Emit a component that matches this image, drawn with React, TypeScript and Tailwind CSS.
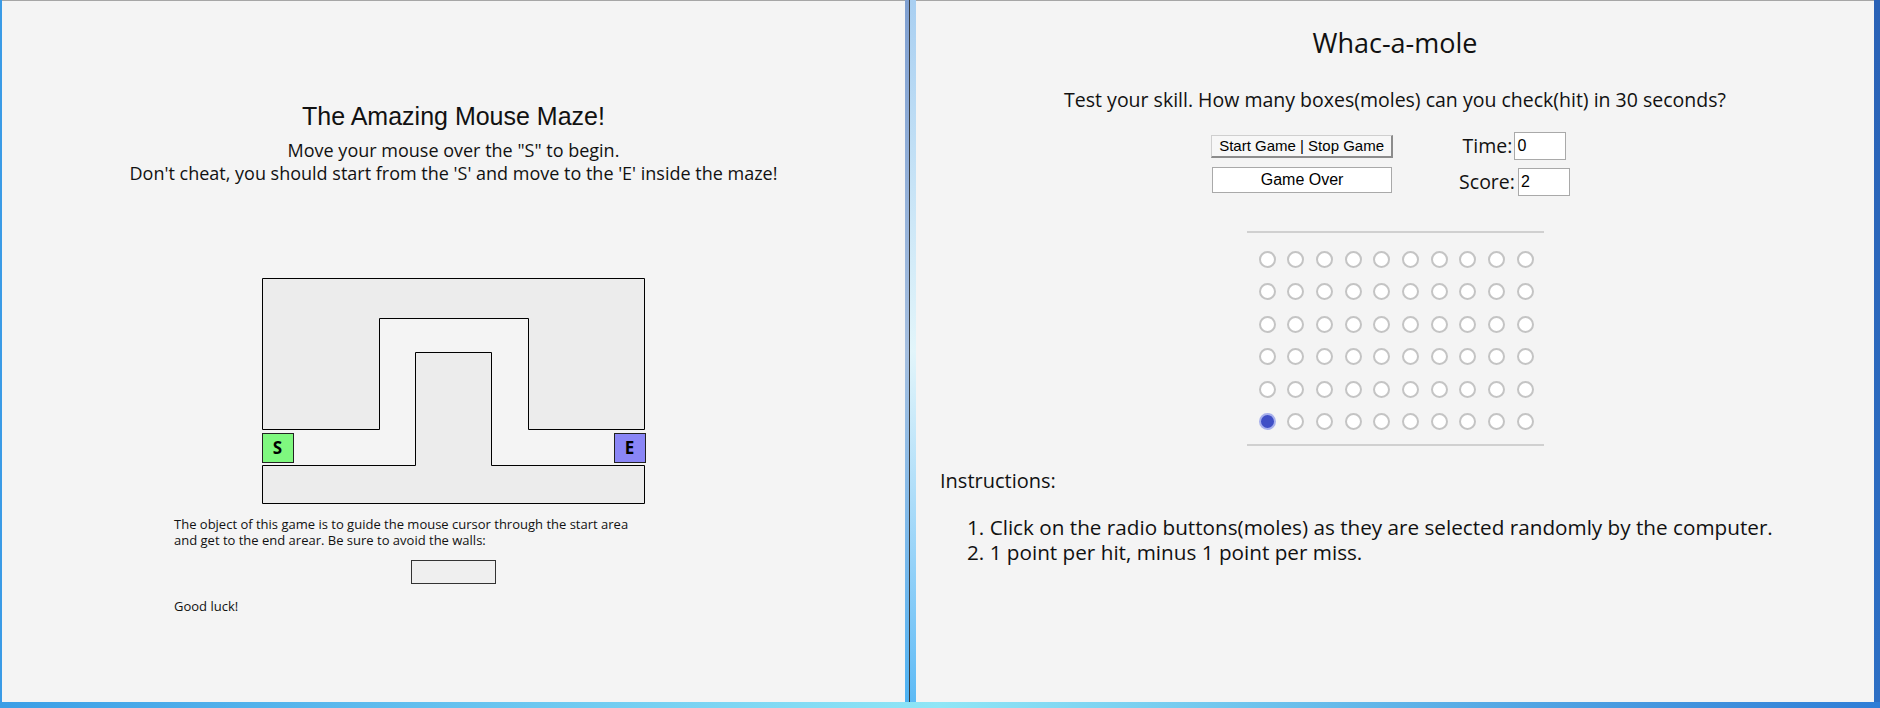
import React from "react";

const sans = "font-['Open_Sans',sans-serif]";
const arial = "font-['Liberation_Sans',Arial,sans-serif]";

function Maze() {
  return (
    <div className="relative h-[226px] w-[384px]">
      <svg width="384" height="226" className="absolute inset-0">
        <path
          d="M0.5 0.5H382.5V151.5H266.5V40.5H117.5V151.5H0.5Z"
          fill="#ececec"
          stroke="#000"
        />
        <path
          d="M0.5 187.5H153.5V74.5H229.5V187.5H382.5V225.5H0.5Z"
          fill="#ececec"
          stroke="#000"
        />
      </svg>
      <div
        className={`absolute left-0 top-[155px] flex h-[30px] w-[32px] items-center justify-center border border-[#222] bg-[#7ff87f] text-[17px] font-bold text-black ${sans}`}
      >
        S
      </div>
      <div
        className={`absolute left-[352px] top-[155px] flex h-[30px] w-[32px] items-center justify-center border border-[#222] bg-[#8a86f6] text-[17px] font-bold text-black ${sans}`}
      >
        E
      </div>
    </div>
  );
}

function MazePanel() {
  return (
    <div className="flex h-full w-[903px] flex-col items-center border-t border-[#a6a6a6] bg-[#f4f4f4] pt-[100px] text-[#111]">
      <h1 className={`text-[25px] leading-[30px] ${arial}`}>The Amazing Mouse Maze!</h1>
      <p className={`mt-[8px] text-center text-[18px] leading-[23px] ${sans}`}>
        Move your mouse over the "S" to begin.
        <br />
        Don't cheat, you should start from the 'S' and move to the 'E' inside the maze!
      </p>
      <div className="mt-[93px]">
        <Maze />
      </div>
      <div className={`w-full text-[13px] leading-[16px] ${sans}`}>
        <p className="mt-[12px] pl-[172px]">
          The object of this game is to guide the mouse cursor through the start area
          <br />
          and get to the end arear. Be sure to avoid the walls:
        </p>
        <div className="mx-auto mt-[12px] h-[24px] w-[85px] border border-[#333] bg-[#efefef]" />
        <p className="mt-[14px] pl-[172px]">Good luck!</p>
      </div>
    </div>
  );
}

function Divider() {
  return (
    <div className="flex h-full w-[11px]">
      <div className="w-[4px] bg-linear-to-b from-[#7f9fd0] via-[#a4bedf] to-[#4cb2f2]" />
      <div className="w-[1px] bg-[#3c3c3c]" />
      <div className="w-[6px] bg-linear-to-b from-[#a9cff1] via-[#e2f5fa] to-[#5cbaf5]" />
    </div>
  );
}

function MolePanel() {
  const holes = Array.from({ length: 60 }, (_, i) => i);
  return (
    <div className="flex h-full flex-1 flex-col border-t border-[#a6a6a6] bg-[#f4f4f4] pt-[26px] text-[#111]">
      <h1 className={`text-center text-[27px] leading-[32px] ${sans}`}>Whac-a-mole</h1>
      <p className={`mt-[29px] text-center text-[19.5px] leading-[24px] ${sans}`}>
        Test your skill. How many boxes(moles) can you check(hit) in 30 seconds?
      </p>

      <div className="mt-[20px] flex justify-center gap-[66px] pr-[9px]">
        <div className="flex flex-col items-center gap-[9px] pt-[3px]">
          <button
            className={`h-[23px] w-[182px] border border-[#cfcfcf] border-b-2 border-r-2 border-b-[#8c8c8c] border-r-[#8c8c8c] bg-[#f7f7f7] text-[15px] leading-[18px] text-black ${arial}`}
          >
            Start Game | Stop Game
          </button>
          <div
            className={`flex h-[26px] w-[180px] items-center justify-center border border-[#a9a9a9] bg-white text-[16px] text-black ${arial}`}
          >
            Game Over
          </div>
        </div>
        <div className={`flex flex-col items-center gap-[8px] text-[19.5px] leading-[28px] ${sans}`}>
          <div className="flex items-center gap-[2px]">
            <span>Time:</span>
            <div className={`flex h-[28px] w-[52px] items-center border border-[#a9a9a9] bg-white pl-[2px] text-[16px] text-black ${arial}`}>
              0
            </div>
          </div>
          <div className="flex items-center gap-[3px]">
            <span>Score:</span>
            <div className={`flex h-[28px] w-[52px] items-center border border-[#a9a9a9] bg-white pl-[2px] text-[16px] text-black ${arial}`}>
              2
            </div>
          </div>
        </div>
      </div>

      <div className="mx-auto mt-[35px] w-[297px]">
        <div className="h-[2px] bg-[#d0d0d0]" />
        <div className="mt-[18px] grid grid-cols-[repeat(10,17px)] gap-x-[11.7px] gap-y-[15.4px] pl-[12px]">
          {holes.map((i) =>
            i === 50 ? (
              <div key={i} className="h-[17px] w-[17px] rounded-full border-2 border-[#a7b0ec] bg-[#3f4fc6]" />
            ) : (
              <div key={i} className="h-[17px] w-[17px] rounded-full border-2 border-[#c4c4c4] bg-white" />
            )
          )}
        </div>
        <div className="mt-[14px] h-[2px] bg-[#d0d0d0]" />
      </div>

      <div className={`pl-[24px] ${sans}`}>
        <p className="mt-[21px] text-[20px] leading-[27px]">Instructions:</p>
        <ol className="mt-[21px] pl-[27px] text-[20.7px] leading-[25px]">
          <li>1. Click on the radio buttons(moles) as they are selected randomly by the computer.</li>
          <li>2. 1 point per hit, minus 1 point per miss.</li>
        </ol>
      </div>
    </div>
  );
}

export default function App() {
  return (
    <div className="flex h-[708px] w-[1880px] flex-col overflow-hidden bg-[#f4f4f4]">
      <div className="flex h-[702px]">
        <div className="h-full w-[2px] bg-[#3a9be6]" />
        <MazePanel />
        <Divider />
        <MolePanel />
        <div className="h-full w-[6px] bg-linear-to-b from-[#2a62b6] to-[#2d6fc4]" />
      </div>
      <div className="h-[6px] bg-linear-to-r from-[#3a9ee6] via-[#8fe6f6] to-[#2e7dd6]" />
    </div>
  );
}
